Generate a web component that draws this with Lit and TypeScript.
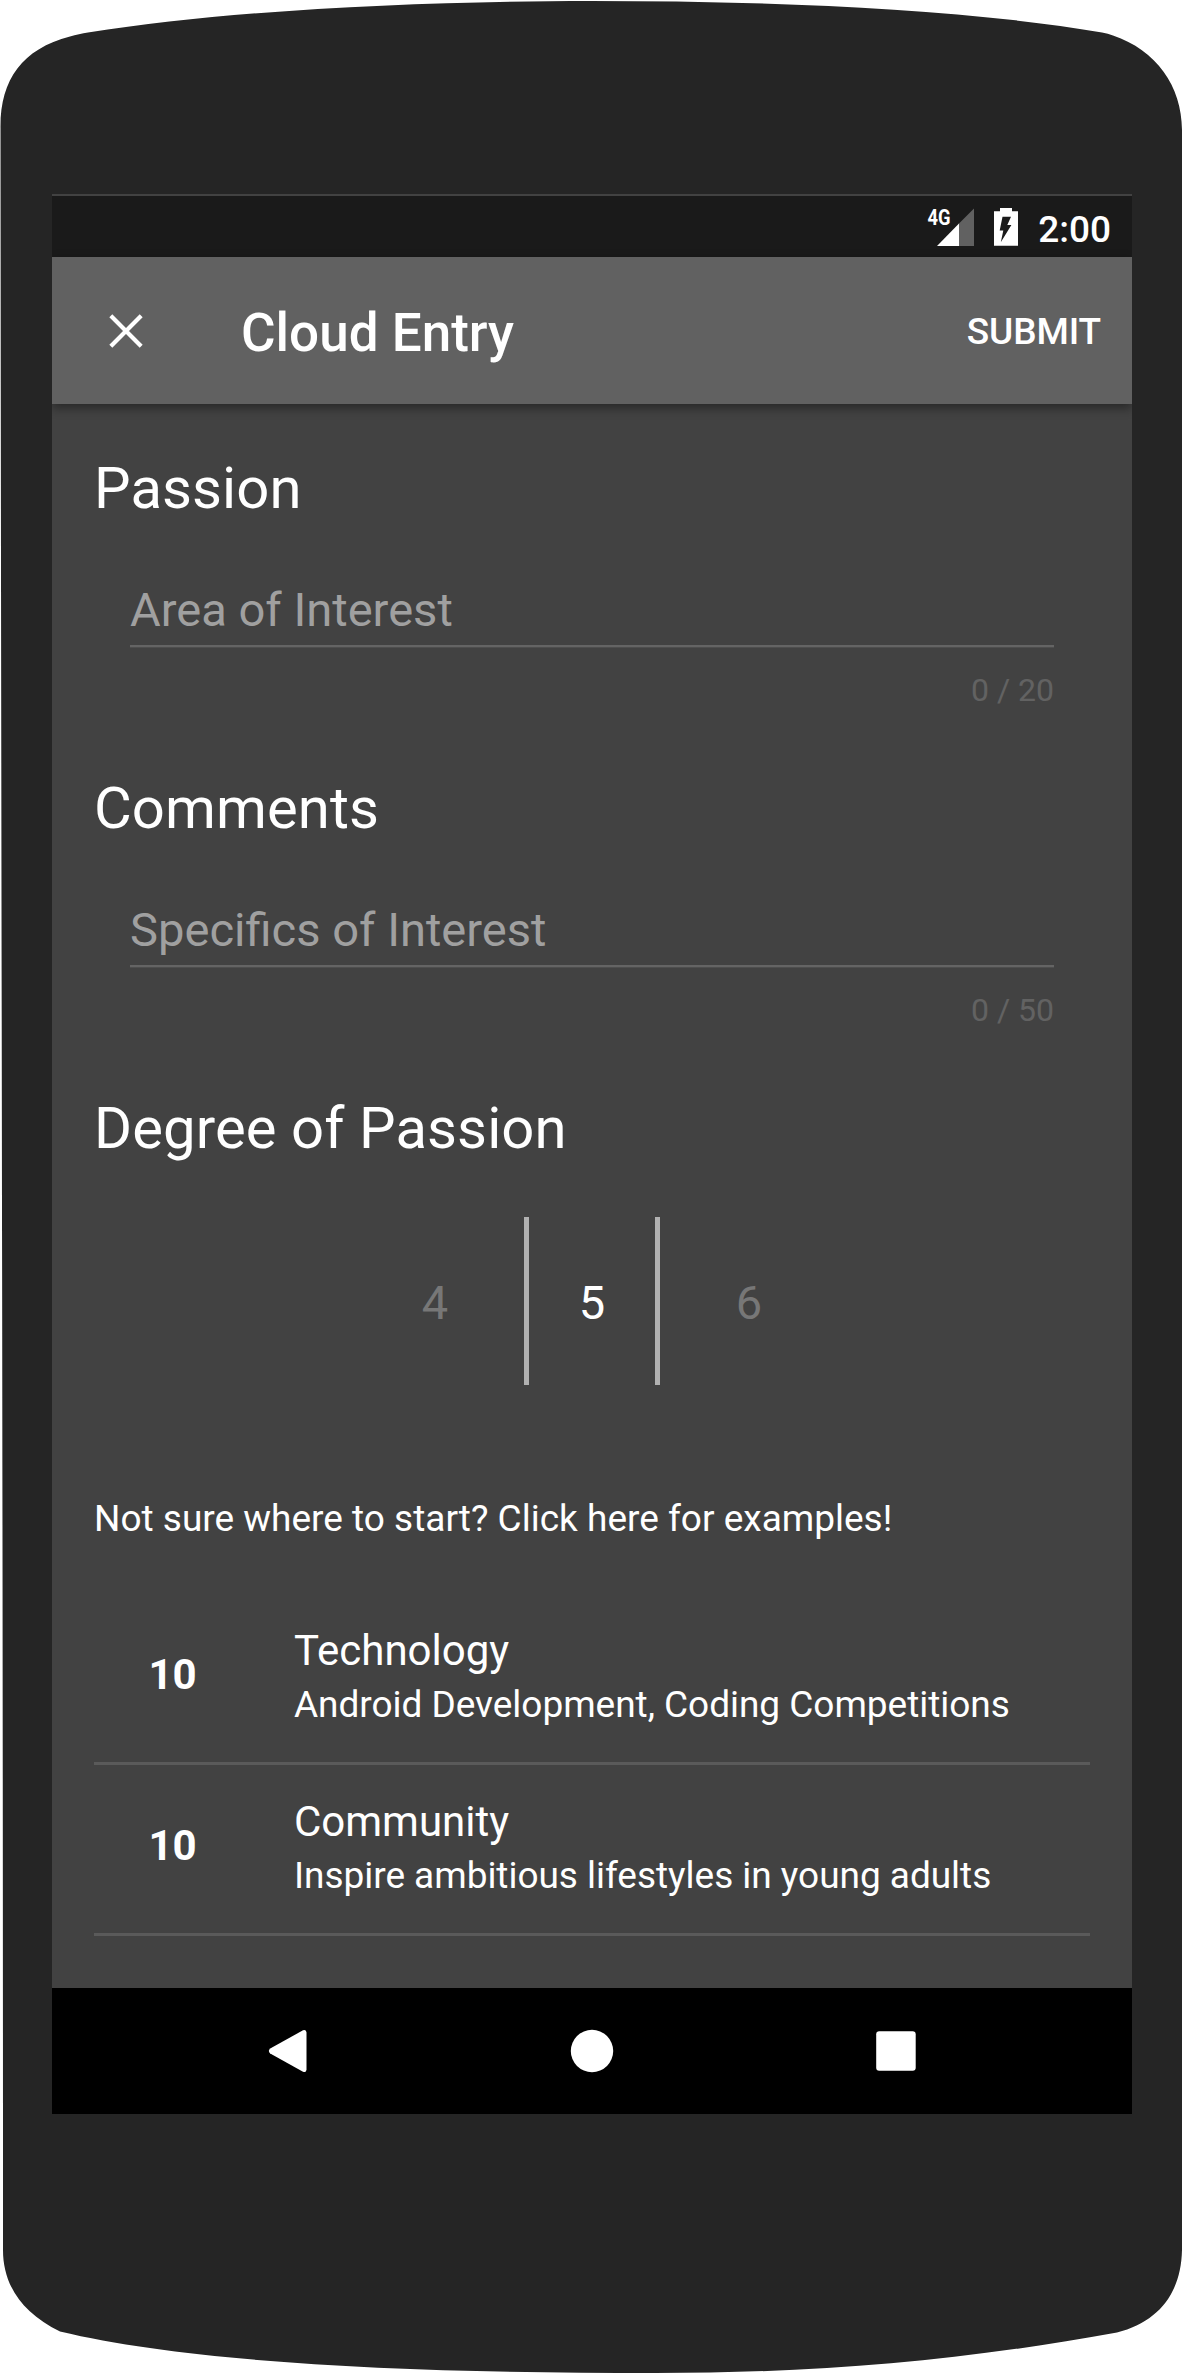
import { LitElement, html, css, svg } from "lit";
import { customElement, property } from "lit/decorators.js";

interface Example {
  degree: number;
  title: string;
  detail: string;
}

const EXAMPLES: Example[] = [
  { degree: 10, title: "Technology", detail: "Android Development, Coding Competitions" },
  { degree: 10, title: "Community", detail: "Inspire ambitious lifestyles in young adults" },
];

@customElement("status-bar")
class StatusBar extends LitElement {
  static styles = css`
    :host {
      display: flex;
      align-items: flex-start;
      justify-content: flex-end;
      box-sizing: border-box;
      height: 63px;
      padding: 9px 21px 0 0;
      border-top: 2px solid #424242;
      background: #1a1a1a;
      color: #fff;
    }
    .signal {
      width: 48px;
      height: 42px;
      margin-right: 19px;
    }
    .battery {
      width: 25px;
      height: 42px;
      margin-right: 19px;
    }
    .net {
      font: 700 22px Roboto, sans-serif;
    }
    .clock {
      font: 500 37px/44px Roboto, sans-serif;
      margin-top: 3px;
    }
  `;
  render() {
    return html`
      <svg class="signal" viewBox="927 205 48 42">
        <path d="M937 246L959 223.500V246z" fill="#fff" />
        <path d="M959 223.500L974 208.500V246H959z" fill="#616161" />
        <text class="net" x="927.500" y="225" textLength="23" lengthAdjust="spacingAndGlyphs" fill="#fff">4G</text>
      </svg>
      <svg class="battery" viewBox="995 205 25 42">
        <path d="M1001 208H1013V211.300H1019V245.700H995V211.300H1001z" fill="#fff" />
        <path d="M1003.500 216.700H1012L1008.300 225H1012.400L1001.800 242.300L1004.300 230.600H1000.700z" fill="#1a1a1a" />
      </svg>
      <span class="clock">2:00</span>
    `;
  }
}

@customElement("app-toolbar")
class AppToolbar extends LitElement {
  static styles = css`
    :host {
      display: flex;
      align-items: center;
      box-sizing: border-box;
      height: 147px;
      padding: 0 31px 0 52.5px;
      background: #616161;
      color: #fff;
      box-shadow: 0 4px 10px rgba(0, 0, 0, 0.42);
      z-index: 1;
      font-family: Roboto, sans-serif;
      font-weight: 500;
    }
    .close {
      width: 42px;
      height: 42px;
    }
    .title {
      flex: 1;
      margin: 5px 0 0 94.5px;
      font-size: 53px;
      line-height: 62px;
      font-weight: 500;
    }
    .submit {
      font-size: 37px;
      line-height: 44px;
      margin-top: 3px;
      letter-spacing: -0.1px;
    }
  `;
  render() {
    return html`
      <svg class="close" viewBox="0 0 42 42">
        <path d="M7.300 7.300L34.700 34.700M34.700 7.300L7.300 34.700" stroke="#fff" stroke-width="4.200" stroke-linecap="square" />
      </svg>
      <h1 class="title">Cloud Entry</h1>
      <span class="submit">SUBMIT</span>
    `;
  }
}

@customElement("counted-field")
class CountedField extends LitElement {
  @property() placeholder = "";
  @property({ type: Number }) limit = 0;

  static styles = css`
    :host {
      display: flex;
      flex-direction: column;
      margin: 0 36px;
      font-family: Roboto, sans-serif;
    }
    .hint {
      height: 56px;
      padding-bottom: 7px;
      font-size: 47.1px;
      line-height: 56px;
      color: #a0a0a0;
    }
    .line {
      height: 2px;
      background: #646464;
      border-bottom: 1px solid #4e4e4e;
    }
    .count {
      align-self: flex-end;
      margin: 23px 0 1px;
      font-size: 32px;
      line-height: 38px;
      color: #626262;
    }
  `;
  render() {
    return html`
      <div class="hint">${this.placeholder}</div>
      <div class="line"></div>
      <div class="count">0 / ${this.limit}</div>
    `;
  }
}

@customElement("nav-bar")
class NavBar extends LitElement {
  static styles = css`
    :host {
      display: flex;
      align-items: center;
      justify-content: center;
      gap: 259px;
      height: 126px;
      background: #000;
    }
    .icon {
      width: 44px;
      height: 44px;
      fill: #fff;
    }
  `;
  private icon(shape: unknown) {
    return html`<svg class="icon" viewBox="0 0 44 44">${shape}</svg>`;
  }
  render() {
    return html`
      ${this.icon(svg`<path d="M3.200 19.400L36 1.300Q39.300 0 39.500 3.500V40.500Q39.300 44 36 42.700L3.200 24.600Q0.500 22 3.200 19.400z" />`)}
      ${this.icon(svg`<circle cx="22" cy="22" r="21.200" />`)}
      ${this.icon(svg`<rect x="3.200" y="2.300" width="39.500" height="39.500" rx="3" />`)}
    `;
  }
}

@customElement("app-root")
class AppRoot extends LitElement {
  static styles = css`
    :host {
      display: block;
      width: 1183px;
      height: 2373px;
      background: #fff;
      font-family: Roboto, sans-serif;
      color: #fff;
    }
    .device {
      box-sizing: border-box;
      height: 2373px;
      padding: 194px 51px 259px 52px;
      background: #252525;
      clip-path: path(
        "M0.500 128C0 80 22 49 70 36.500C76 34.500 82 33.600 88 32.500C238 9 430 1 591 1C765 1 960 8 1102 32.500Q1108 33.500 1113 35.500C1156 50 1182 86 1182 130V2250C1181 2294 1158 2322 1117 2332.500C960 2361 820 2373 655 2373C430 2373 200 2365 60 2331.500C22 2313 3 2285 3 2250C3 1500 1 800 0.500 128z"
      );
    }
    .screen {
      display: flex;
      flex-direction: column;
      height: 1920px;
      background: #424242;
      overflow: hidden;
    }
    .content {
      flex: 1;
      display: flex;
      flex-direction: column;
      padding: 50px 42px 0;
    }
    .heading {
      margin: 0;
      font-size: 58px;
      line-height: 68px;
      font-weight: 400;
      letter-spacing: 0.1px;
    }
    .field {
      margin-top: 60px;
      margin-bottom: 64px;
    }
    .picker {
      display: grid;
      grid-template-columns: 157px 157px 157px;
      justify-content: center;
      align-items: center;
      height: 168px;
      margin-top: 55px;
      font-size: 47px;
      line-height: 56px;
      text-align: center;
    }
    .value {
      padding-top: 4px;
      color: #777;
    }
    .selected {
      box-sizing: border-box;
      justify-self: center;
      width: 136px;
      height: 168px;
      padding-top: 58px;
      border: solid #b1b1b1;
      border-width: 0 5px;
    }
    .prompt {
      margin: 112px 0 53px;
      font-size: 37px;
      line-height: 44px;
    }
    .row {
      display: grid;
      grid-template-columns: 200px 1fr;
      box-sizing: border-box;
      height: 171px;
      border-bottom: 3px solid #5a5a5a;
    }
    .degree {
      padding: 56px 0 0 54.5px;
      font-size: 42px;
      line-height: 50px;
      font-weight: 700;
    }
    .text {
      display: flex;
      flex-direction: column;
      gap: 7px;
      padding-top: 32px;
      white-space: nowrap;
    }
    .name {
      font-size: 42px;
      line-height: 50px;
    }
    .detail {
      font-size: 37px;
      line-height: 44px;
      letter-spacing: -0.03px;
    }
  `;

  render() {
    return html`
      <div class="device">
        <div class="screen">
          <status-bar></status-bar>
          <app-toolbar></app-toolbar>
          <main class="content">
            <h2 class="heading">Passion</h2>
            <counted-field class="field" placeholder="Area of Interest" limit="20"></counted-field>
            <h2 class="heading">Comments</h2>
            <counted-field class="field" placeholder="Specifics of Interest" limit="50"></counted-field>
            <h2 class="heading">Degree of Passion</h2>
            <div class="picker">
              <span class="value">4</span>
              <span class="selected">5</span>
              <span class="value">6</span>
            </div>
            <div class="prompt">Not sure where to start? Click here for examples!</div>
            ${EXAMPLES.map(
              (e) => html`
                <div class="row">
                  <div class="degree">${e.degree}</div>
                  <div class="text">
                    <span class="name">${e.title}</span>
                    <span class="detail">${e.detail}</span>
                  </div>
                </div>
              `,
            )}
          </main>
          <nav-bar></nav-bar>
        </div>
      </div>
    `;
  }
}
